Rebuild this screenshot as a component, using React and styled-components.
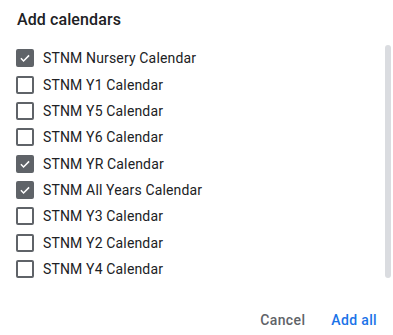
import React, { useState } from "react";
import styled, { createGlobalStyle } from "styled-components";

const GlobalStyle = createGlobalStyle`
  html, body {
    margin: 0;
    padding: 0;
    background: #ffffff;
  }
  body {
    font-family: Roboto, "Noto Sans", Arial, sans-serif;
    color: #202124;
  }
`;

const calendars = [
  { name: "STNM Nursery Calendar", checked: true },
  { name: "STNM Y1 Calendar", checked: false },
  { name: "STNM Y5 Calendar", checked: false },
  { name: "STNM Y6 Calendar", checked: false },
  { name: "STNM YR Calendar", checked: true },
  { name: "STNM All Years Calendar", checked: true },
  { name: "STNM Y3 Calendar", checked: false },
  { name: "STNM Y2 Calendar", checked: false },
  { name: "STNM Y4 Calendar", checked: false },
];

export default function App() {
  const [items, setItems] = useState(calendars);

  const toggle = (i) =>
    setItems((prev) =>
      prev.map((c, idx) => (idx === i ? { ...c, checked: !c.checked } : c))
    );

  return (
    <>
      <GlobalStyle />
      <Dialog>
        <Title>Add calendars</Title>
        <Body>
          <List>
            {items.map((c, i) => (
              <Row key={c.name} onClick={() => toggle(i)}>
                <Box $checked={c.checked}>
                  {c.checked && (
                    <svg width="14" height="14" viewBox="0 0 24 24">
                      <path
                        d="M5 12.5l4.5 4.5L19 7.5"
                        fill="none"
                        stroke="#fff"
                        strokeWidth="2.6"
                      />
                    </svg>
                  )}
                </Box>
                <Label>{c.name}</Label>
              </Row>
            ))}
          </List>
          <Scrollbar />
        </Body>
        <Actions>
          <TextButton $tone="#5f6368">Cancel</TextButton>
          <TextButton $tone="#1a73e8">Add all</TextButton>
        </Actions>
      </Dialog>
    </>
  );
}

const Dialog = styled.div`
  width: 393px;
  height: 335px;
  display: flex;
  flex-direction: column;
  box-sizing: border-box;
`;

const Title = styled.h2`
  margin: 0;
  padding: 10px 17px 0;
  font-size: 16px;
  font-weight: 500;
  line-height: 20px;
  color: #202124;
  letter-spacing: 0.1px;
`;

const Body = styled.div`
  display: flex;
  padding: 19px 0 0 16px;
`;

const List = styled.div`
  flex: 1;
  display: flex;
  flex-direction: column;
`;

const Row = styled.label`
  display: flex;
  align-items: center;
  height: 26.375px;
  gap: 9px;
  cursor: pointer;
  &:first-child {
    margin-top: -4px;
  }
`;

const Box = styled.span`
  width: 18px;
  height: 18px;
  box-sizing: border-box;
  border-radius: 2px;
  border: 2px solid #5f6368;
  background: ${(p) => (p.$checked ? "#5f6368" : "transparent")};
  display: flex;
  align-items: center;
  justify-content: center;
  flex-shrink: 0;
`;

const Label = styled.span`
  font-size: 14px;
  color: #202124;
  letter-spacing: 0.15px;
`;

const Scrollbar = styled.div`
  width: 6px;
  height: 233px;
  margin: -4px 2px 0 0;
  border-radius: 3px;
  background: #dadce0;
`;

const Actions = styled.div`
  display: flex;
  justify-content: flex-end;
  gap: 10px;
  padding: 24px 8px 0 0;
`;

const TextButton = styled.button`
  background: none;
  border: none;
  font-family: Roboto, "Noto Sans", Arial, sans-serif;
  font-size: 14px;
  font-weight: 500;
  letter-spacing: 0.35px;
  color: ${(p) => p.$tone};
  padding: 6px 8px;
  cursor: pointer;
`;
